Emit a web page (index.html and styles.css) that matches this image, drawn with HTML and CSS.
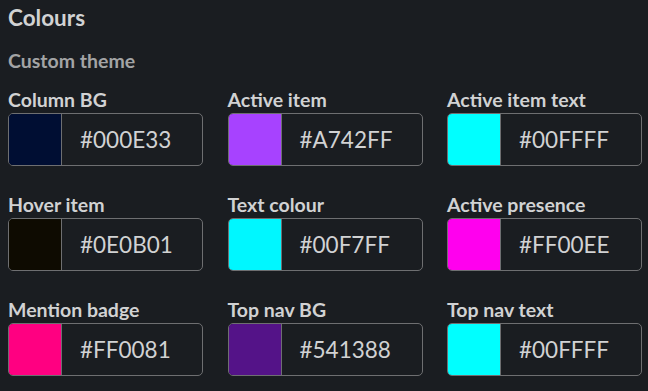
FILE: index.html
```html
<!DOCTYPE html>
<html lang="en">
<head>
  <meta charset="UTF-8">
  <title>Colours</title>
  <link rel="stylesheet" href="styles.css">
</head>
<body>
  <div class="prefs">
    <h2 class="prefs-title">Colours</h2>
    <h3 class="prefs-sub">Custom theme</h3>

    <div class="colour-grid">
      <div class="colour-field">
        <label>Column BG</label>
        <div class="colour-input">
          <span class="swatch" style="background:#000E33"></span>
          <span class="hex">#000E33</span>
        </div>
      </div>
      <div class="colour-field">
        <label>Active item</label>
        <div class="colour-input">
          <span class="swatch" style="background:#A742FF"></span>
          <span class="hex">#A742FF</span>
        </div>
      </div>
      <div class="colour-field">
        <label>Active item text</label>
        <div class="colour-input">
          <span class="swatch" style="background:#00FFFF"></span>
          <span class="hex">#00FFFF</span>
        </div>
      </div>

      <div class="colour-field">
        <label>Hover item</label>
        <div class="colour-input">
          <span class="swatch" style="background:#0E0B01"></span>
          <span class="hex">#0E0B01</span>
        </div>
      </div>
      <div class="colour-field">
        <label>Text colour</label>
        <div class="colour-input">
          <span class="swatch" style="background:#00F7FF"></span>
          <span class="hex">#00F7FF</span>
        </div>
      </div>
      <div class="colour-field">
        <label>Active presence</label>
        <div class="colour-input">
          <span class="swatch" style="background:#FF00EE"></span>
          <span class="hex">#FF00EE</span>
        </div>
      </div>

      <div class="colour-field">
        <label>Mention badge</label>
        <div class="colour-input">
          <span class="swatch" style="background:#FF0081"></span>
          <span class="hex">#FF0081</span>
        </div>
      </div>
      <div class="colour-field">
        <label>Top nav BG</label>
        <div class="colour-input">
          <span class="swatch" style="background:#541388"></span>
          <span class="hex">#541388</span>
        </div>
      </div>
      <div class="colour-field">
        <label>Top nav text</label>
        <div class="colour-input">
          <span class="swatch" style="background:#00FFFF"></span>
          <span class="hex">#00FFFF</span>
        </div>
      </div>
    </div>
  </div>
</body>
</html>
```

FILE: styles.css
```css
* {
  margin: 0;
  padding: 0;
  box-sizing: border-box;
}

body {
  font-family: Lato, "Noto Sans", sans-serif;
  background-color: #1a1d21;
  color: #d1d2d3;
  padding: 6px 8px;
}

/* Headings */
.prefs-title {
  font-size: 22.5px;
  font-weight: 700;
  line-height: 24px;
  color: #d1d2d3;
}

.prefs-sub {
  font-size: 19.5px;
  font-weight: 700;
  line-height: 24px;
  margin-top: 19px;
  color: #a3a4a5;
}

/* Grid of colour inputs */
.colour-grid {
  display: grid;
  grid-template-columns: repeat(3, 195px);
  column-gap: 24.5px;
  row-gap: 27px;
  margin-top: 15px;
}

.colour-field label {
  display: block;
  font-size: 19.5px;
  font-weight: 700;
  line-height: 24px;
  margin-bottom: 1px;
}

.colour-input {
  display: flex;
  align-items: center;
  height: 53px;
  border: 1px solid #6e6f71;
  border-radius: 5px;
  overflow: hidden;
}

.swatch {
  width: 53px;
  height: 100%;
  border-right: 1px solid #6e6f71;
}

.hex {
  padding-left: 18px;
  font-size: 22.5px;
  color: #d1d2d3;
}
```
